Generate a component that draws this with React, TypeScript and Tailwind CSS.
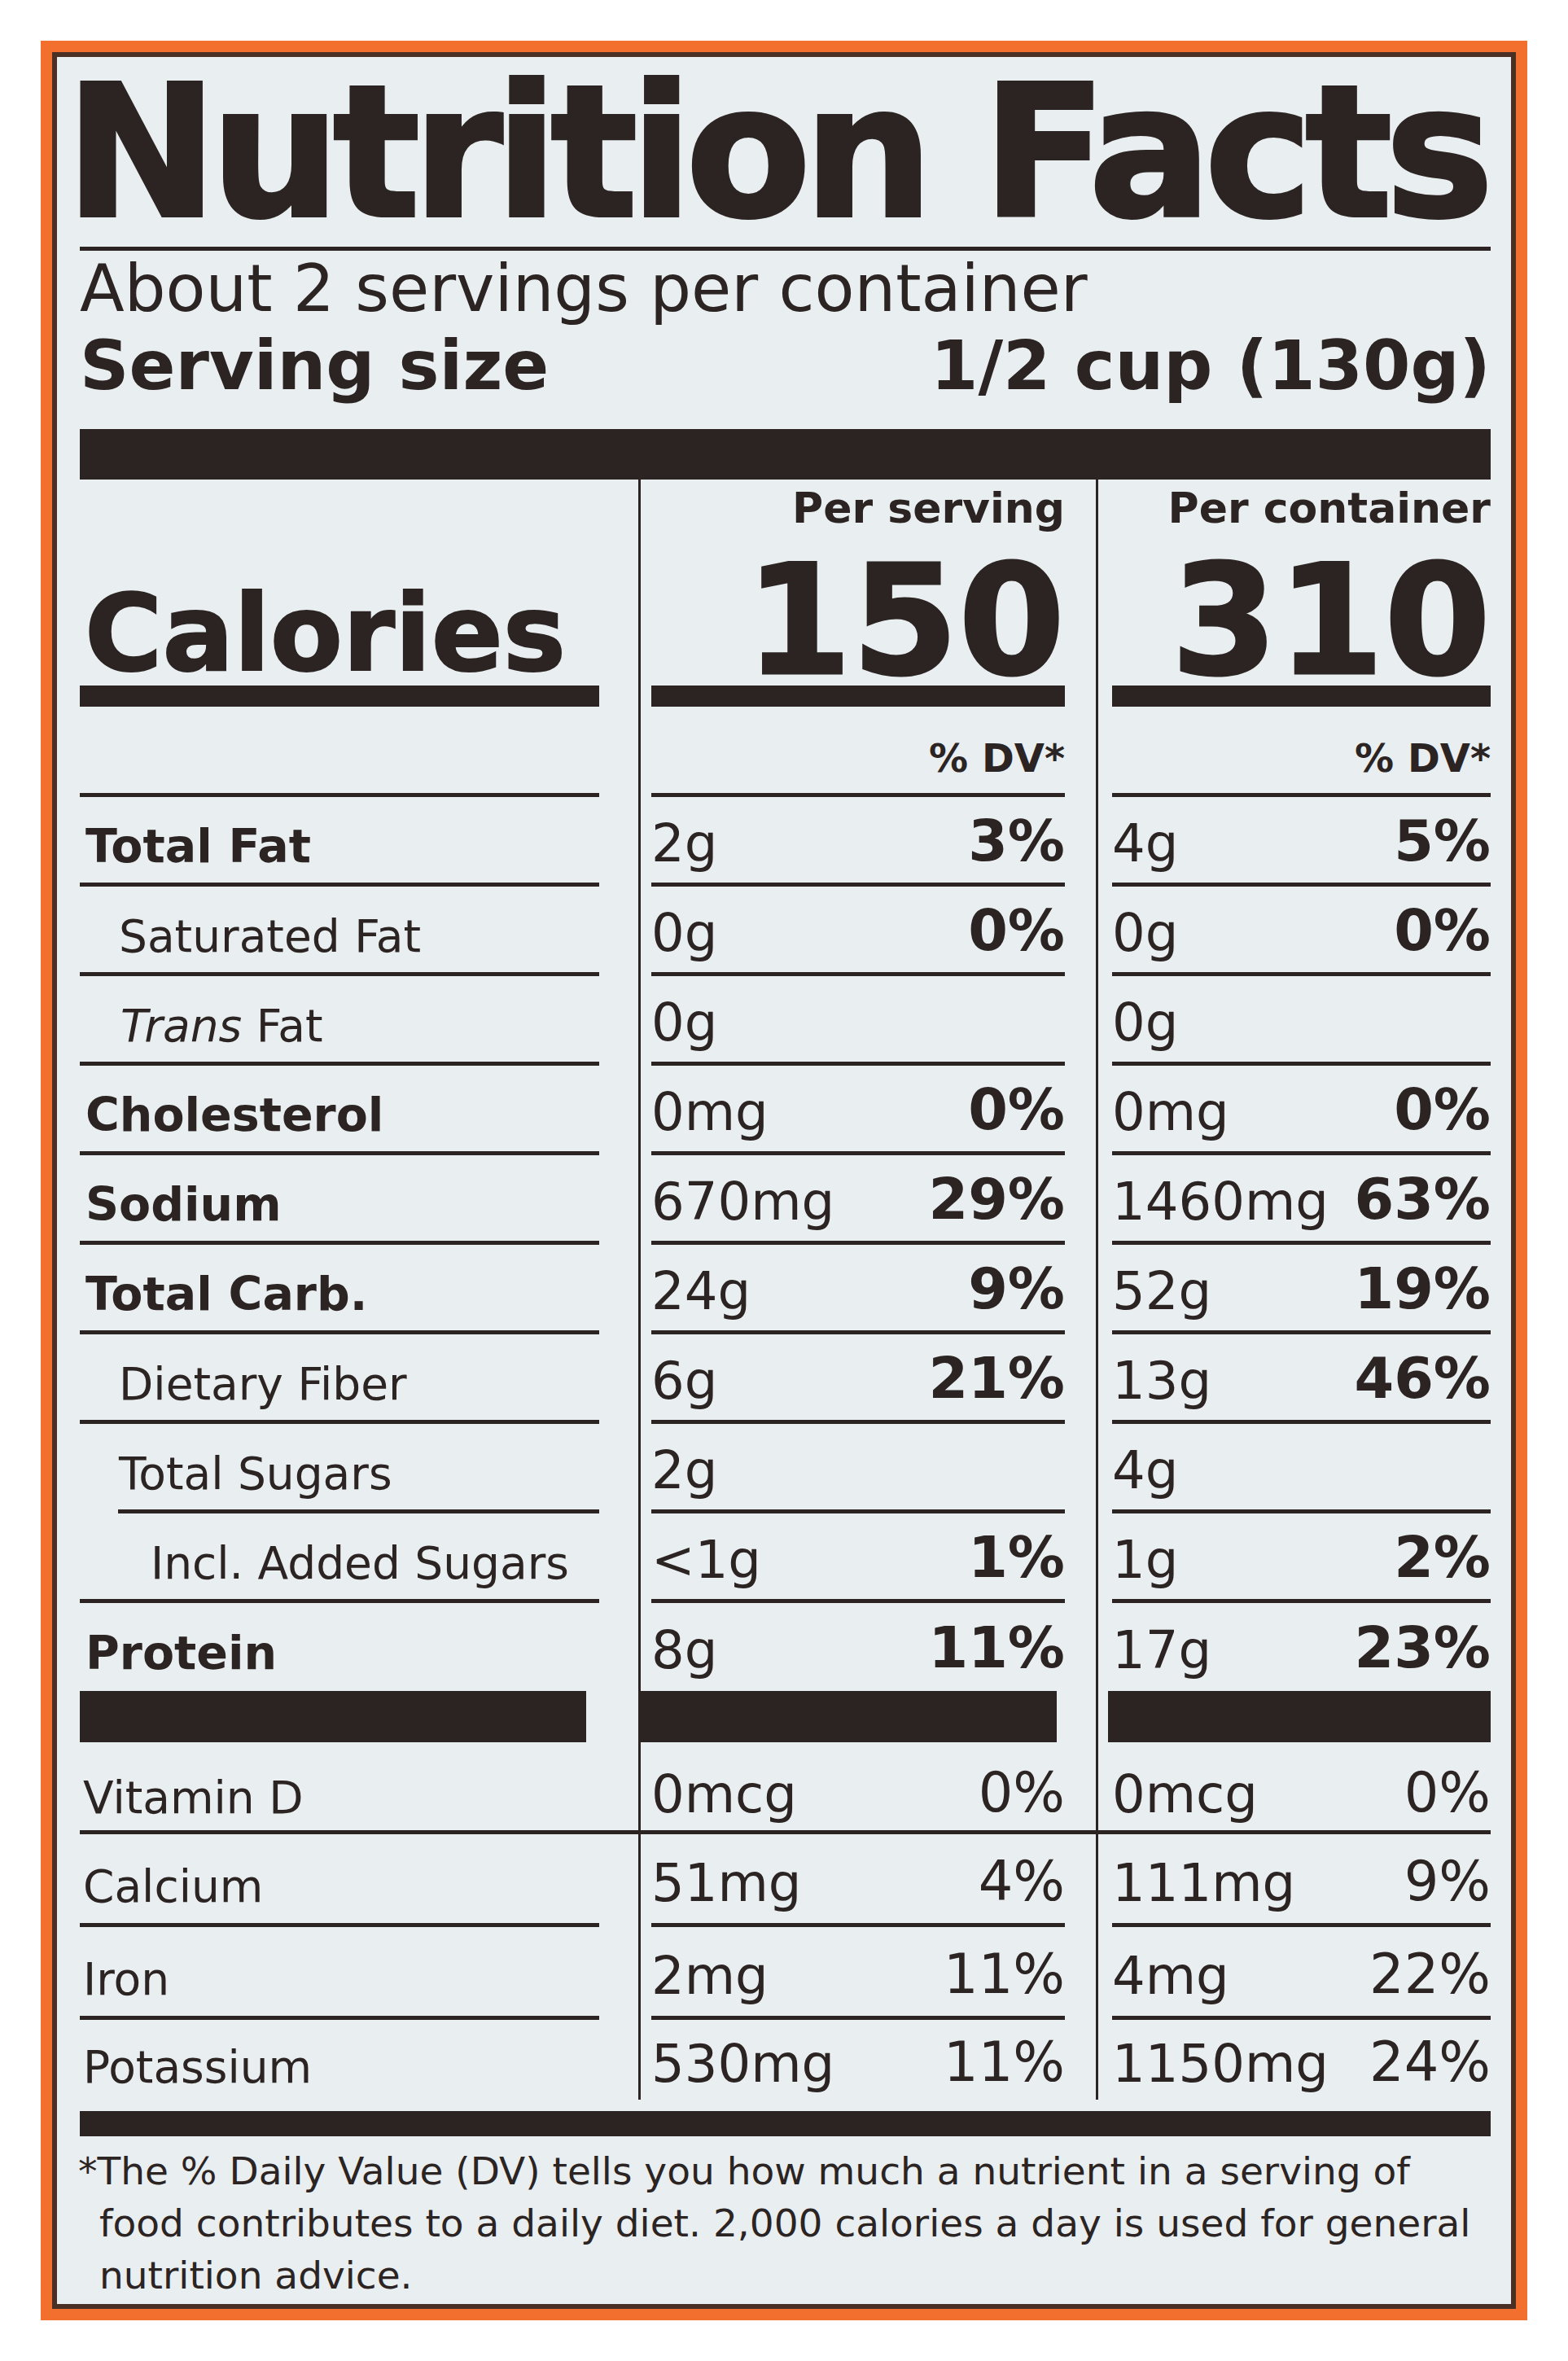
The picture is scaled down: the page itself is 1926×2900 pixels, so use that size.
import type { ReactNode } from 'react'

// nutrition label, photographed: orange frame, pale label, three columns

type RowProps = {
    label: ReactNode
    labelCls: string
    s: string
    sp?: string
    c: string
    cp?: string
    pctCls: string
    cellCls: string
    ruleCls?: string
    rowCls?: string
}

function Row({ label, labelCls, s, sp, c, cp, pctCls, cellCls, ruleCls = '', rowCls = '' }: RowProps) {
    return (
        <div className={`flex ${rowCls}`}>
            <div className="w-[686px] pr-[48px]">
                <div className={`flex items-end ${cellCls} ${ruleCls}`}>
                    <span className={`leading-none whitespace-nowrap ${labelCls}`}>{label}</span>
                </div>
            </div>
            <div className="w-[562px] border-l-[3px] border-[#2b2422] pl-[13px] pr-[38px]">
                <div className={`flex items-end justify-between ${cellCls}`}>
                    <span className="text-[64px] leading-none whitespace-nowrap">{s}</span>
                    {sp && <span className={`leading-none whitespace-nowrap ${pctCls}`}>{sp}</span>}
                </div>
            </div>
            <div className="flex-1 border-l-[3px] border-[#2b2422] pl-[17px]">
                <div className={`flex items-end justify-between ${cellCls}`}>
                    <span className="text-[64px] leading-none whitespace-nowrap">{c}</span>
                    {cp && <span className={`leading-none whitespace-nowrap ${pctCls}`}>{cp}</span>}
                </div>
            </div>
        </div>
    )
}

const BOLD = 'text-[57px] font-bold pl-[7px]'
const SUB = 'text-[55px] pl-[48px]'
const PCT_B = 'text-[70px] font-bold'
const PCT = 'text-[67px]'
const CELL = 'h-[110px] border-b-[5px] border-[#2b2422] pb-[16px]'

const NUTRIENTS = [
    { label: 'Total Fat', labelCls: BOLD, s: '2g', sp: '3%', c: '4g', cp: '5%' },
    { label: 'Saturated Fat', labelCls: SUB, s: '0g', sp: '0%', c: '0g', cp: '0%' },
    {
        label: <><span className="italic">Trans</span> Fat</>,
        labelCls: 'text-[55px] pl-[50px]', s: '0g', c: '0g',
    },
    { label: 'Cholesterol', labelCls: BOLD, s: '0mg', sp: '0%', c: '0mg', cp: '0%' },
    { label: 'Sodium', labelCls: BOLD, s: '670mg', sp: '29%', c: '1460mg', cp: '63%' },
    { label: 'Total Carb.', labelCls: BOLD, s: '24g', sp: '9%', c: '52g', cp: '19%' },
    { label: 'Dietary Fiber', labelCls: SUB, s: '6g', sp: '21%', c: '13g', cp: '46%' },
    // the rule under total sugars starts indented
    { label: 'Total Sugars', labelCls: 'text-[55px] pl-[1px]', ruleCls: 'ml-[47px]', s: '2g', c: '4g' },
    { label: 'Incl. Added Sugars', labelCls: 'text-[55px] pl-[87px]', s: '<1g', sp: '1%', c: '1g', cp: '2%' },
]

export default function App() {
    return (
        <div className="min-h-[2900px] bg-white pt-[50px] pl-[50px] font-['DejaVu_Sans',sans-serif] text-[#2b2422]">
            <div className="w-[1826px] border-[14px] border-[#f26f2e]">
                <div className="border-[6px] border-[#4a2f25] bg-[#e9eef1] pl-[28px] pr-[25px] pt-[6px] pb-[3px]">
                    <h1 className="-ml-[18px] text-[224px] leading-none font-bold tracking-[-9px] whitespace-nowrap [-webkit-text-stroke:4px_#2b2422]">
                        Nutrition Facts
                    </h1>
                    <div className="mt-[3px] h-[5px] bg-[#2b2422]" />
                    <p className="mt-[7px] text-[80px] leading-none whitespace-nowrap">About 2 servings per container</p>
                    <div className="mt-[12px] flex justify-between text-[84px] leading-none font-bold whitespace-nowrap">
                        <span>Serving size</span>
                        <span>1/2 cup (130g)</span>
                    </div>
                    <div className="mt-[36px] h-[62px] bg-[#2b2422]" />

                    {/* calories */}
                    <div className="flex">
                        <div className="w-[686px] pr-[48px] flex flex-col justify-end">
                            <div className="pl-[6px] text-[130px] leading-[110px] font-bold whitespace-nowrap [-webkit-text-stroke:2px_#2b2422]">Calories</div>
                            <div className="mt-[9px] h-[26px] bg-[#2b2422]" />
                        </div>
                        <div className="w-[562px] border-l-[3px] border-[#2b2422] pl-[13px] pr-[38px] pt-[9px] flex flex-col items-end">
                            <div className="text-[52px] leading-none font-bold whitespace-nowrap">Per serving</div>
                            <div className="mt-[37px] text-[188px] leading-[150px] font-bold [-webkit-text-stroke:3px_#2b2422]">150</div>
                            <div className="mt-[5px] h-[26px] w-full bg-[#2b2422]" />
                        </div>
                        <div className="flex-1 border-l-[3px] border-[#2b2422] pl-[17px] pt-[9px] flex flex-col items-end">
                            <div className="text-[52px] leading-none font-bold whitespace-nowrap">Per container</div>
                            <div className="mt-[37px] text-[188px] leading-[150px] font-bold [-webkit-text-stroke:3px_#2b2422]">310</div>
                            <div className="mt-[5px] h-[26px] w-full bg-[#2b2422]" />
                        </div>
                    </div>

                    {/* % DV header */}
                    <div className="flex">
                        <div className="w-[686px] pr-[48px]">
                            <div className="h-[111px] border-b-[5px] border-[#2b2422]" />
                        </div>
                        <div className="w-[562px] border-l-[3px] border-[#2b2422] pl-[13px] pr-[38px]">
                            <div className="h-[111px] border-b-[5px] border-[#2b2422] flex items-end justify-end pb-[19px] text-[48px] leading-none font-bold">% DV*</div>
                        </div>
                        <div className="flex-1 border-l-[3px] border-[#2b2422] pl-[17px]">
                            <div className="h-[111px] border-b-[5px] border-[#2b2422] flex items-end justify-end pb-[19px] text-[48px] leading-none font-bold">% DV*</div>
                        </div>
                    </div>

                    {NUTRIENTS.map((n, i) => (
                        <Row key={i} {...n} pctCls={PCT_B} cellCls={CELL} />
                    ))}
                    <Row label="Protein" labelCls={BOLD} s="8g" sp="11%" c="17g" cp="23%" pctCls={PCT_B} cellCls="h-[108px] pb-[18px]" />

                    {/* thick bar split by the column lines */}
                    <div className="flex">
                        <div className="w-[686px] pr-[64px]"><div className="h-[63px] bg-[#2b2422]" /></div>
                        <div className="w-[562px] border-l-[3px] border-[#2b2422] pr-[48px]"><div className="h-[63px] bg-[#2b2422]" /></div>
                        <div className="flex-1 border-l-[3px] border-[#2b2422] pl-[12px]"><div className="h-[63px] bg-[#2b2422]" /></div>
                    </div>

                    <Row label="Vitamin D" labelCls="text-[55px] pl-[4px]" s="0mcg" sp="0%" c="0mcg" cp="0%" pctCls={PCT}
                        cellCls="h-[108px] pb-[12px]" rowCls="border-b-[5px] border-[#2b2422]" />
                    <Row label="Calcium" labelCls="text-[55px] pl-[4px]" s="51mg" sp="4%" c="111mg" cp="9%" pctCls={PCT}
                        cellCls="h-[114px] border-b-[5px] border-[#2b2422] pb-[17px]" />
                    <Row label="Iron" labelCls="text-[55px] pl-[4px]" s="2mg" sp="11%" c="4mg" cp="22%" pctCls={PCT}
                        cellCls="h-[114px] border-b-[5px] border-[#2b2422] pb-[17px]" />
                    <Row label="Potassium" labelCls="text-[55px] pl-[4px]" s="530mg" sp="11%" c="1150mg" cp="24%" pctCls={PCT}
                        cellCls="h-[98px] pb-[12px]" />

                    <div className="mt-[14px] h-[31px] bg-[#2b2422]" />
                    <p className="mt-[11px] pl-[24px] indent-[-26px] text-[47px] leading-[64px] whitespace-nowrap">
                        *The % Daily Value (DV) tells you how much a nutrient in a serving of<br />
                        food contributes to a daily diet. 2,000 calories a day is used for general<br />
                        nutrition advice.
                    </p>
                </div>
            </div>
        </div>
    )
}
